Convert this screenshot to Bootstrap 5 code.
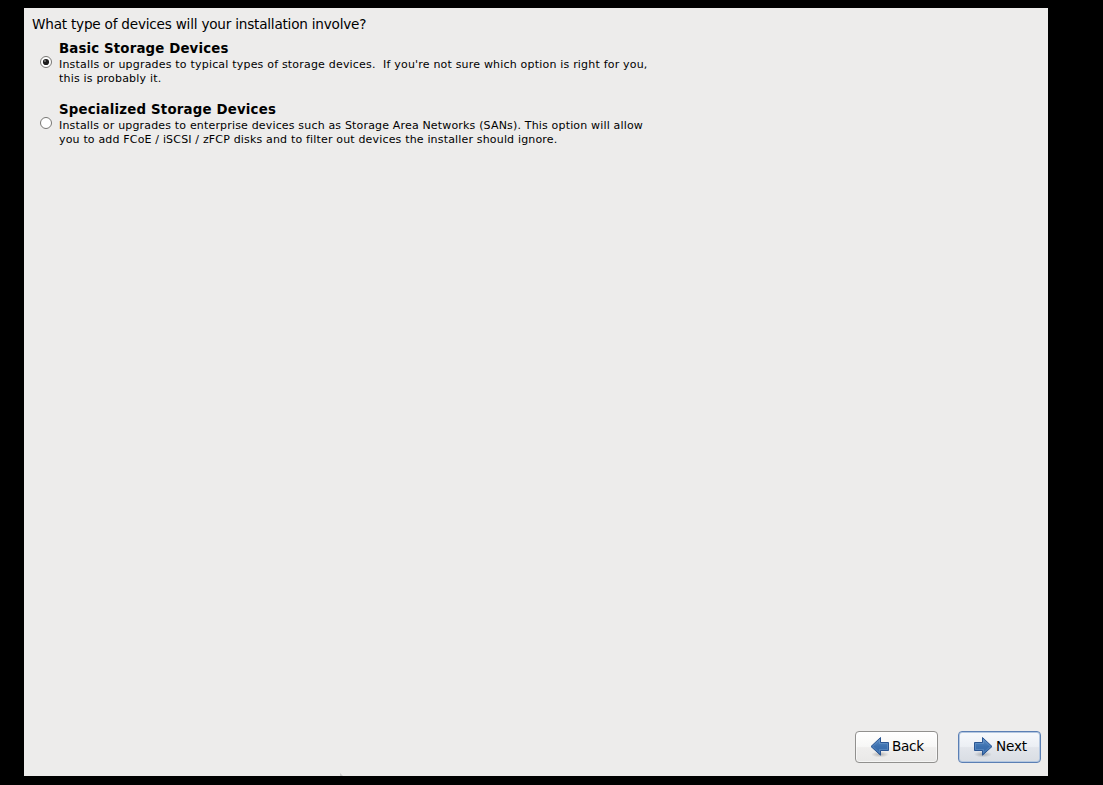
<!DOCTYPE html>
<html lang="en">
<head>
  <meta charset="UTF-8" />
  <meta name="viewport" content="width=device-width, initial-scale=1" />
  <title>Installer - Storage Devices</title>
  <link href="https://cdn.jsdelivr.net/npm/bootstrap@5.3.0/dist/css/bootstrap.min.css" rel="stylesheet" />
  <style>
    body { background: #000; color: #000; font: 13.33px/16px "DejaVu Sans", sans-serif; overflow: hidden; }
    .installer { width: 1024px; height: 768px; margin: 8px 0 0 24px; padding: 8px 7px 13px 8px; background: #edeceb; }
    .question { font-size: 13.6px; line-height: 16px; letter-spacing: -.215px; }
    .options { margin-top: 8px; }
    .device-option { padding-left: 8px; height: 61px; letter-spacing: .195px; }
    .device-option + .device-option { letter-spacing: .17px; }
    .device-option .radio-dot { width: 12px; height: 12px; margin: 16px 7px 0 0; flex: none; }
    .option-title { font-size: 13.33px; line-height: 18px; font-weight: bold; letter-spacing: .15px; }
    .device-option + .device-option .option-title { letter-spacing: .19px; }
    .option-text { font-size: 11px; line-height: 14px; white-space: pre; }
    .btn-wizard {
      width: 83px; height: 32px; padding: 0 0 2px 14px; color: #000; font-size: 13.6px; line-height: 16px; letter-spacing: -.3px;
      border: 1px solid #91908e; border-radius: 4px;
      background: linear-gradient(#fff, #f7f7f6 48%, #efeeed 52%, #e9e8e7);
      box-shadow: inset 0 0 0 1px rgba(255, 255, 255, .55);
    }
    .btn-wizard.focused {
      padding-left: 13px; margin-left: 20px; letter-spacing: -.2px;
      border-color: #5b7fb4;
      background: linear-gradient(#f7f9fc, #eceff4 48%, #e2e5eb 52%, #d9dde3);
      box-shadow: inset 0 0 0 1px #b4c7e0;
    }
    .btn-wizard svg { flex: none; }
    .btn-wizard.focused span { margin-left: 2px; }
    .pointer-tip { position: absolute; left: 340px; top: 773px; }
  </style>
</head>
<body>
  <main class="installer d-flex flex-column">
    <div class="question"><span>What type of devices will your installation involve?</span></div>

    <!-- Device types -->
    <div class="options">
      <label class="device-option d-flex">
        <svg class="radio-dot" viewBox="0 0 12 12">
          <circle cx="6" cy="6" r="5.5" fill="#fff" stroke="#777673" />
          <circle cx="6" cy="6" r="3.1" fill="#1c1c1c" />
          <circle cx="5" cy="5" r="1" fill="#777" />
        </svg>
        <div>
          <div class="option-title"><span>Basic Storage Devices</span></div>
          <div class="option-text">Installs or upgrades to typical types of storage devices.  If you're not sure which option is right for you,
this is probably it.</div>
        </div>
      </label>
      <label class="device-option d-flex">
        <svg class="radio-dot" viewBox="0 0 12 12">
          <circle cx="6" cy="6" r="5.5" fill="#fff" stroke="#777673" />
        </svg>
        <div>
          <div class="option-title"><span>Specialized Storage Devices</span></div>
          <div class="option-text">Installs or upgrades to enterprise devices such as Storage Area Networks (SANs). This option will allow
you to add FCoE / iSCSI / zFCP disks and to filter out devices the installer should ignore.</div>
        </div>
      </label>
    </div>

    <!-- Wizard buttons -->
    <div class="d-flex justify-content-end mt-auto">
      <button type="button" class="btn btn-wizard d-flex align-items-center">
        <svg width="22" height="22" viewBox="0 0 22 22">
          <defs>
            <linearGradient id="arrow" x1="0" y1="0" x2="0" y2="1">
              <stop offset="0" stop-color="#5f8fc6" />
              <stop offset=".5" stop-color="#3d71b0" />
              <stop offset="1" stop-color="#3467a6" />
            </linearGradient>
            <radialGradient id="shade">
              <stop offset="0" stop-color="#000" stop-opacity=".25" />
              <stop offset="1" stop-color="#000" stop-opacity="0" />
            </radialGradient>
          </defs>
          <ellipse cx="10" cy="19.4" rx="9" ry="3" fill="url(#shade)" />
          <path d="M1 11.5 L10.5 2.5 V7.5 H18.5 V15.5 H10.5 V20.2 Z" fill="url(#arrow)" stroke="#2a5592" stroke-linejoin="round" />
          <path d="M2.7 11.5 L9.5 5 V8.5 H17.5 V14.5 H9.5 V17.8 Z" fill="none" stroke="#8cb3de" stroke-opacity=".3" />
        </svg>
        <span>Back</span>
      </button>
      <button type="button" class="btn btn-wizard focused d-flex align-items-center">
        <svg width="22" height="22" viewBox="0 0 22 22">
          <ellipse cx="11" cy="19.4" rx="9" ry="3" fill="url(#shade)" />
          <path d="M20 11.5 L10.5 2.5 V7.5 H2.5 V15.5 H10.5 V20.2 Z" fill="url(#arrow)" stroke="#2a5592" stroke-linejoin="round" />
          <path d="M18.3 11.5 L11.5 5 V8.5 H3.5 V14.5 H11.5 V17.8 Z" fill="none" stroke="#8cb3de" stroke-opacity=".3" />
        </svg>
        <span>Next</span>
      </button>
    </div>
  </main>

  <!-- Tip of the mouse pointer at the bottom edge -->
  <svg class="pointer-tip" width="3" height="3" viewBox="0 0 3 3">
    <path d="M0 0 L3 3 H0 Z" fill="#ccc" />
  </svg>

  <script src="https://cdn.jsdelivr.net/npm/bootstrap@5.3.0/dist/js/bootstrap.bundle.min.js"></script>
</body>
</html>
